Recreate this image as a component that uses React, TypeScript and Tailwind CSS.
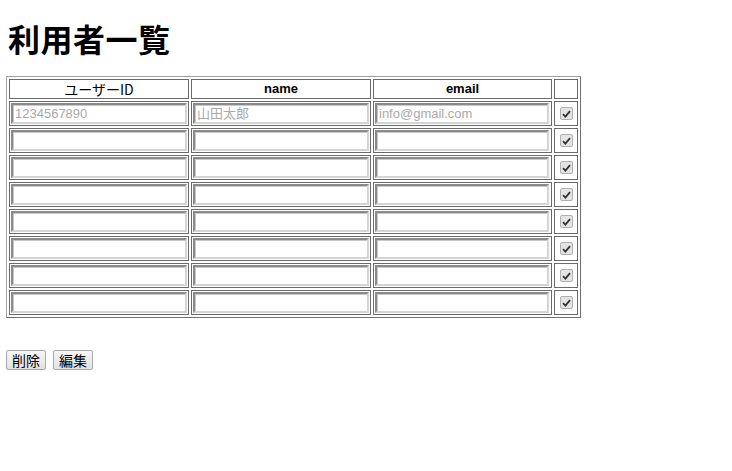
import React from "react";

const rows = [
  { id: "1234567890", name: "山田太郎", email: "info@gmail.com" },
  { id: "", name: "", email: "" },
  { id: "", name: "", email: "" },
  { id: "", name: "", email: "" },
  { id: "", name: "", email: "" },
  { id: "", name: "", email: "" },
  { id: "", name: "", email: "" },
  { id: "", name: "", email: "" },
];

function Field({ placeholder, w }: { placeholder: string; w: string }) {
  return (
    <div
      className={`${w} h-[21px] border-2 border-t-[#8a8a8a] border-l-[#8a8a8a] border-r-[#d4d4d4] border-b-[#d4d4d4] bg-white flex items-center px-[2px] text-[13px] leading-[15px] text-[#a9a9a9] overflow-hidden whitespace-nowrap`}
      style={{ boxShadow: "inset 1px 1px 0 #c8c8c8" }}
    >
      {placeholder}
    </div>
  );
}

function Check() {
  return (
    <div className="w-[13px] h-[13px] rounded-[2px] border border-[#b0b0b0] bg-[#e4e4e4] flex items-center justify-center">
      <svg width="9" height="8" viewBox="0 0 9 8">
        <path d="M1 4.2 L3.4 6.6 L8 1.2" stroke="#333" strokeWidth="1.8" fill="none" />
      </svg>
    </div>
  );
}

export default function App() {
  return (
    <div
      className="bg-white w-[732px] h-[471px] text-black"
      style={{ fontFamily: '"Liberation Sans", "Noto Sans CJK JP", sans-serif' }}
    >
      <h1
        className="pt-[20px] pl-[8px] text-[32px] leading-[37px] font-bold tracking-[0.5px] m-0"
        style={{ fontFamily: '"Noto Sans CJK JP", sans-serif' }}
      >
        利用者一覧
      </h1>
      <div className="pl-[6px] pt-[19px]">
        <table className="border-separate border-spacing-[2px] border border-t-[#a0a0a0] border-l-[#a0a0a0] border-r-[#707070] border-b-[#707070]">
          <thead>
            <tr>
              <th className="border border-[#6a6a6a] p-0 h-[20px] w-[180px] text-[14px] font-normal leading-[16px] text-center" style={{ fontFamily: '"Noto Sans CJK JP", sans-serif' }}>
                ユーザーID
              </th>
              <th className="border border-[#6a6a6a] p-0 h-[20px] w-[180px] text-[13px] font-bold leading-[16px] text-center">
                name
              </th>
              <th className="border border-[#6a6a6a] p-0 h-[20px] w-[179px] text-[13px] font-bold leading-[16px] text-center">
                email
              </th>
              <th className="border border-[#6a6a6a] p-0 h-[20px] w-[24px]"></th>
            </tr>
          </thead>
          <tbody>
            {rows.map((r, i) => (
              <tr key={i}>
                <td className="border border-[#6a6a6a] p-[1px]">
                  <Field placeholder={r.id} w="w-[176px]" />
                </td>
                <td className="border border-[#6a6a6a] p-[1px]">
                  <Field placeholder={r.name} w="w-[176px]" />
                </td>
                <td className="border border-[#6a6a6a] p-[1px]">
                  <Field placeholder={r.email} w="w-[174px]" />
                </td>
                <td className="border border-[#6a6a6a] p-0">
                  <div className="flex items-center justify-center h-[23px]">
                    <Check />
                  </div>
                </td>
              </tr>
            ))}
          </tbody>
        </table>
      </div>
      <div className="pl-[6px] pt-[32px] flex gap-[7px]">
        <button
          className="h-[20px] px-[5px] border border-[#a8a8a8] rounded-[2px] bg-gradient-to-b from-[#f6f6f6] to-[#e2e2e2] text-[14px] leading-[16px]"
          style={{ fontFamily: '"Noto Sans CJK JP", sans-serif' }}
        >
          削除
        </button>
        <button
          className="h-[20px] px-[5px] border border-[#a8a8a8] rounded-[2px] bg-gradient-to-b from-[#f6f6f6] to-[#e2e2e2] text-[14px] leading-[16px]"
          style={{ fontFamily: '"Noto Sans CJK JP", sans-serif' }}
        >
          編集
        </button>
      </div>
    </div>
  );
}
